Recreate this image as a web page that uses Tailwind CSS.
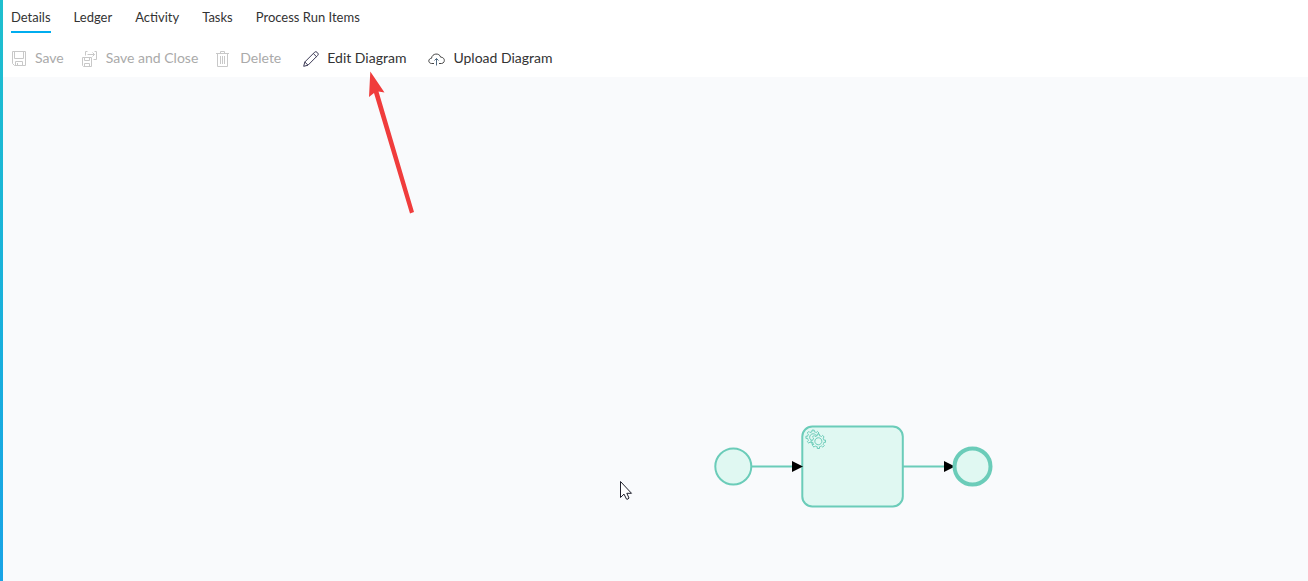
<!DOCTYPE html>
<html lang="en">
<head>
<meta charset="utf-8">
<title>Process diagram</title>
<script src="https://cdn.jsdelivr.net/npm/@tailwindcss/browser@4"></script>
</head>
<body class="relative flex min-h-screen overflow-hidden bg-white font-['Lato',sans-serif] text-[#333333]">
<div class="w-[3px] shrink-0 bg-linear-to-b from-[#1fbfce] to-[#19a3e6]"></div>
<div class="flex min-w-0 flex-1 flex-col">
  <nav class="flex h-[34px] gap-[23px] px-2 text-[13px] leading-[34px]" aria-label="Sections">
    <a href="#details" aria-current="page" class="h-[33px] border-b-2 border-[#00adef]">Details</a>
    <a href="#ledger">Ledger</a>
    <a href="#activity">Activity</a>
    <a href="#tasks">Tasks</a>
    <a href="#items">Process Run Items</a>
  </nav>
  <div role="toolbar" aria-label="Actions" class="flex h-[43px] items-center gap-[18px] px-2 pt-1 text-sm leading-5">
    <button disabled class="flex items-center gap-2 text-[#aaaaaa]">
      <svg class="size-4 overflow-visible" viewBox="0 -1 16 16" fill="none" stroke="#c8c8c8"><path d="M1.5 .5h13v14H3.500l-2-2zM3.500 .5v7h9v-7M4.500 14.500v-4h7v4M6.500 12v2.500"/></svg>
      Save</button>
    <button disabled class="flex items-center gap-2 text-[#aaaaaa]">
      <svg class="size-4 overflow-visible" viewBox="0 -1 16 16" fill="none" stroke="#c8c8c8"><path d="M.5 6.500h9v9h-8l-1-1zM2.500 6.500v3h5v-3M2.500 15.500v-3h5v3M3.500 4.500v-4h2M12.500.500h2v8h-3M5.500 3.500h7M10.500 1.500l2 2-2 2"/></svg>
      Save and Close</button>
    <button disabled class="flex items-center gap-2 text-[#aaaaaa]">
      <svg class="size-4 overflow-visible" viewBox="2 -1 16 16" fill="none" stroke="#c8c8c8"><path d="M2 2.500h13M6.500 2.500v-2h4v2M3.500 2.500v13h10v-13M6.500 5v8M8.500 5v8M10.500 5v8"/></svg>
      Delete</button>
    <button class="ml-1 flex items-center gap-2">
      <svg class="size-4 overflow-visible" viewBox="0 -1 16 16" fill="none" stroke="#3c3a55"><path d="M.7 15.300l1.100-4.300L11.600 1.200q1.200-1.100 2.500.100l.6.600q1.200 1.200 0 2.500L5 14.200zM1.800 11L5 14.200M10.300 2.500l3.200 3.200"/></svg>
      Edit Diagram</button>
    <button class="ml-1 flex items-center gap-2">
      <svg class="h-4 w-[17px] overflow-visible" viewBox="0 -1 17 16" fill="none" stroke="#444"><path d="M6 12.500H3.600C-.2 12.300 0 7.500 3.500 7.300 4 2.200 11.400 1.500 12.700 6.200c4.800 0 4.600 6.100.8 6.300H11"/><path stroke="#526b82" d="M8.500 14.500v-7M6.500 9.500l2-2 2 2"/></svg>
      Upload Diagram</button>
  </div>
  <main class="relative flex-1 bg-[#f9fafc]">
    <svg class="absolute left-[707px] top-[343px]" width="290" height="92" viewBox="0 0 290 92" fill="#e0f8f2" stroke="#6bccb9" stroke-width="2" role="img" aria-label="Start event, service task, end event">
      <circle cx="23.300" cy="46.500" r="18"/>
      <path d="M41.500 46.500H86M193 46.500H238" stroke-width="2"/>
      <rect x="92.300" y="6.500" width="100.500" height="80" rx="10"/>
      <path d="M82 41v11l11-5.500zM234 41v11l11-5.500z" fill="#000" stroke="none"/>
      <circle cx="262.500" cy="46.500" r="18" stroke-width="4"/>
      <defs><g id="gear"><circle cx="-1.140" cy="-7.230" r="4" stroke="none"/><path d="m0 0v-1.713c.352-.071.704-.178 1.048-.321.344-.145.666-.321.966-.521l1.194 1.180 1.567-1.577-1.195-1.180c.403-.614.683-1.299.825-2.018l1.622-.01v-2.220l-1.637.01c-.073-.352-.178-.700-.324-1.044-.145-.344-.321-.664-.523-.962l1.131-1.136-1.583-1.563-1.130 1.136c-.614-.401-1.303-.681-2.023-.822l.009-1.619h-2.241l.004 1.631c-.354.074-.705.180-1.050.324-.344.144-.665.321-.964.520l-1.170-1.158-1.567 1.579 1.168 1.157c-.403.613-.683 1.298-.825 2.017l-1.659.003v2.222l1.672-.006c.073.351.180.702.324 1.045.145.344.321.664.523.961l-1.199 1.197 1.584 1.560 1.196-1.193c.614.403 1.303.682 2.023.823l.001 1.699zm.221-3.996c-1.789.750-3.858-.093-4.610-1.874-.752-1.783.091-3.846 1.880-4.596 1.788-.749 3.857.093 4.609 1.874.752 1.782-.091 3.846-1.879 4.596z"/></g></defs>
      <use href="#gear" x="104.300" y="24.500" stroke-width="1"/>
      <use href="#gear" x="109.500" y="28.500" stroke-width="1"/>
    </svg>
    <svg class="absolute left-[616px] top-[403px]" width="14" height="22" viewBox="0 0 14 22" fill="#fff" stroke="#20202c" aria-hidden="true"><path d="M1.500 1.500v16l3.500-3.400 2.500 5q1.700.6 2.500-1.100L7.800 13.300h4.700z"/></svg>
  </main>
</div>
<svg class="pointer-events-none absolute left-[360px] top-[66px]" width="60" height="152" viewBox="0 0 60 152" fill="#f03c3c" aria-hidden="true"><path d="M10.300 5.500L24.500 26.500 18.500 25.500 54 146 50 147.500 14 27 9 31z"/></svg>
</body>
</html>
